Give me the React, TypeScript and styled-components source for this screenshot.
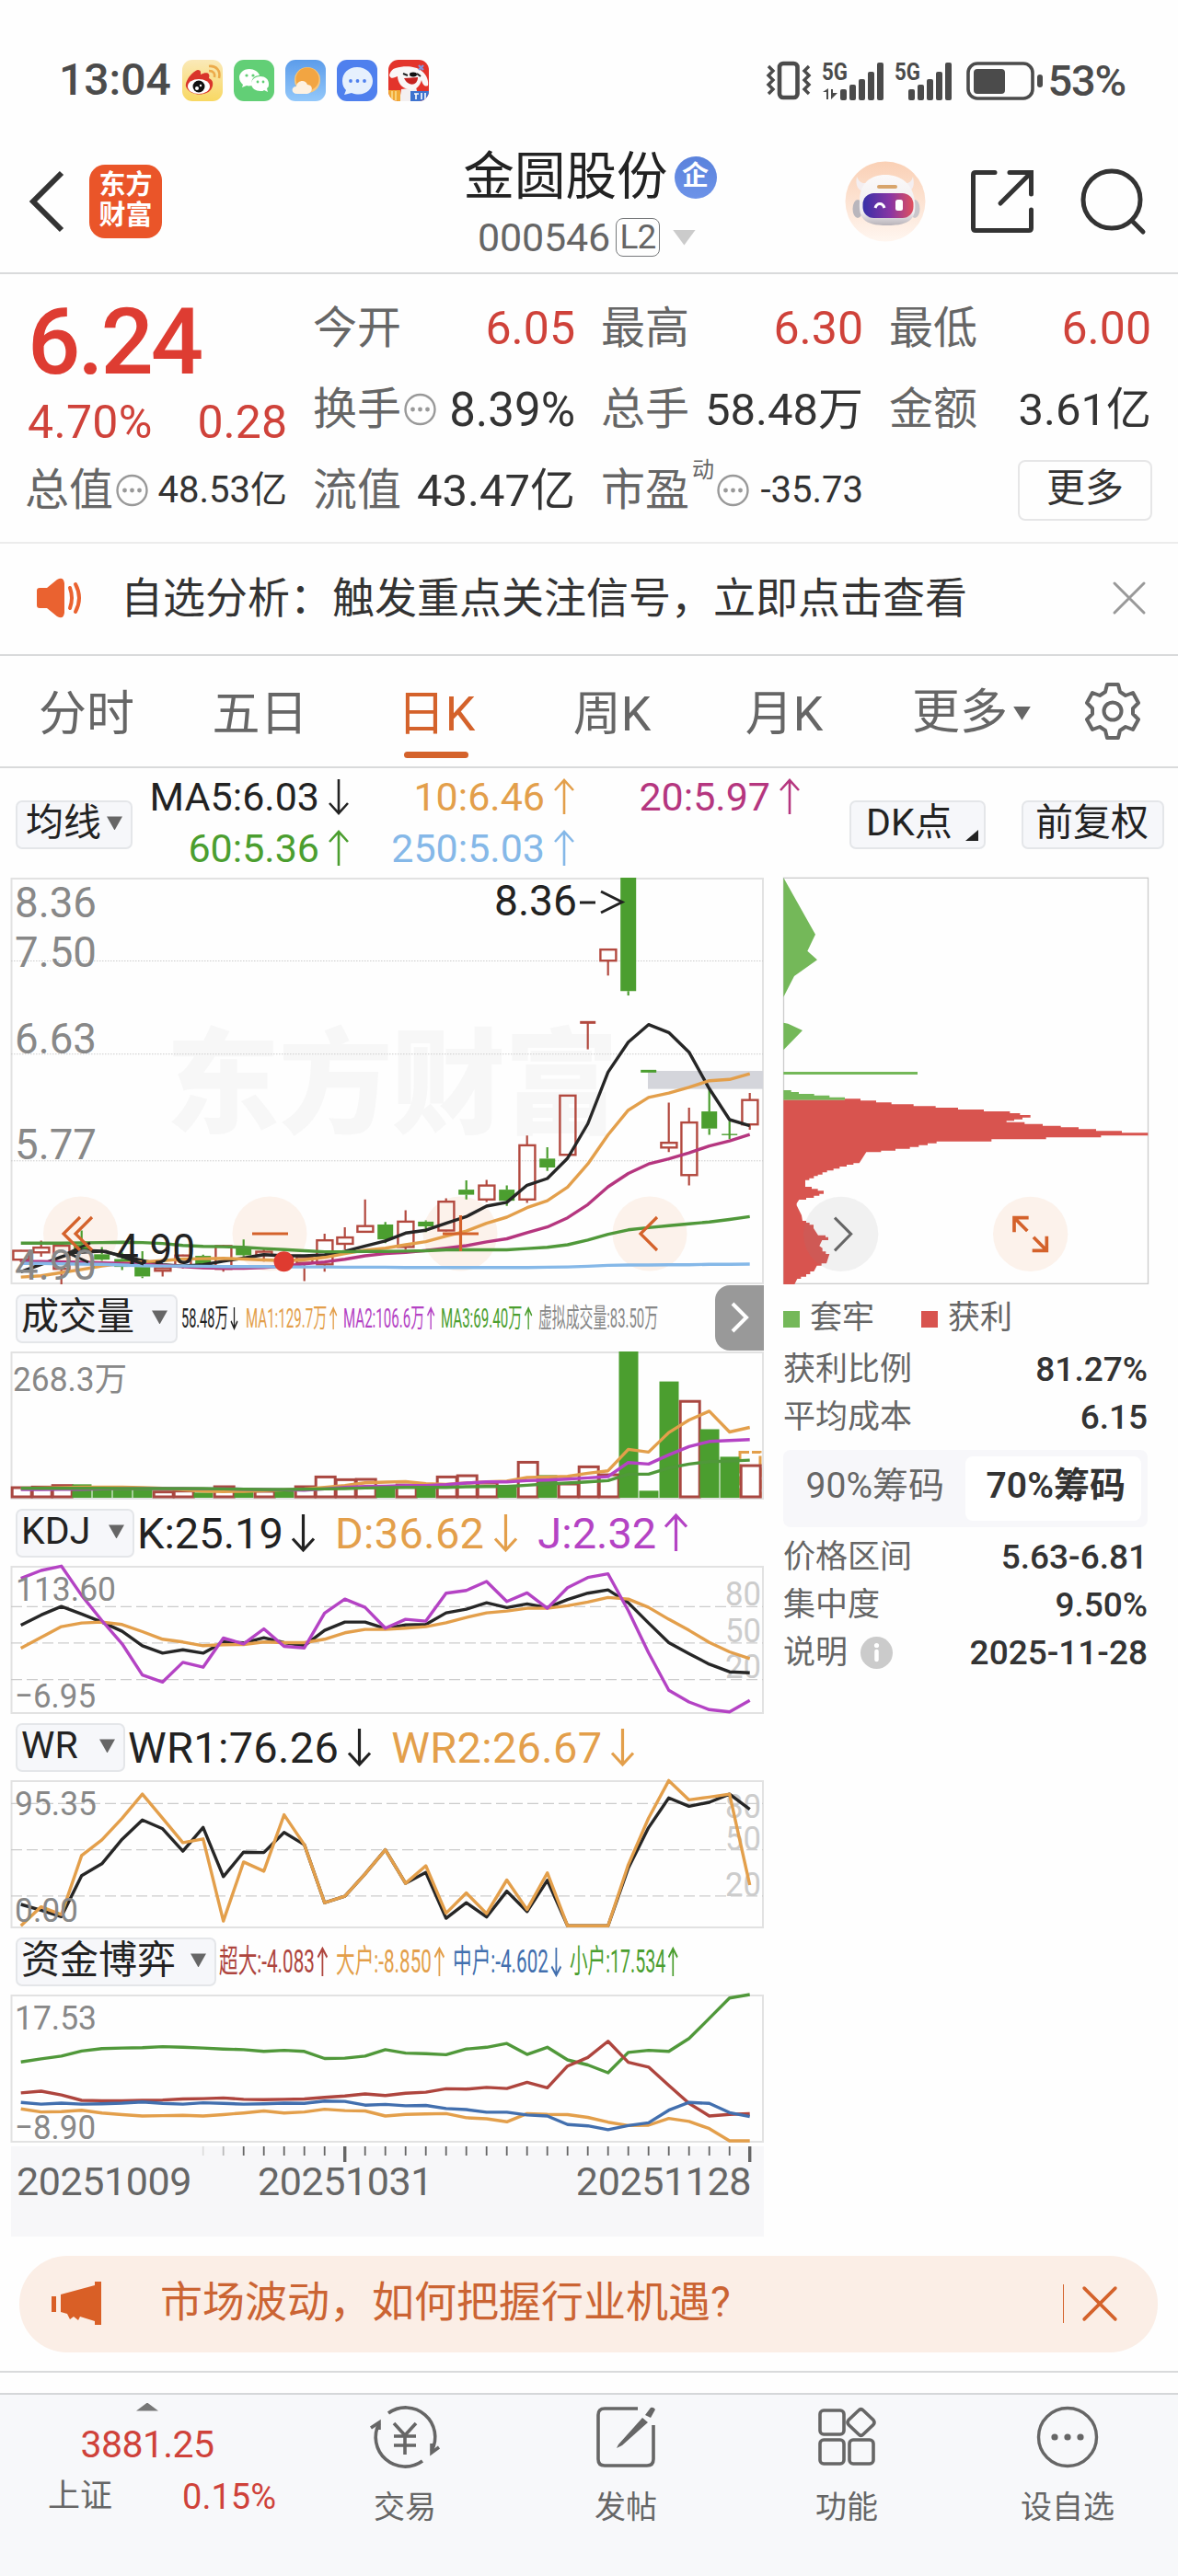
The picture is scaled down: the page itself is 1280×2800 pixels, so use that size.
import * as React from "react";
import styled, { createGlobalStyle } from "styled-components";

const RED = "#cf423a";
const ORANGE = "#e39f4b";
const GREEN = "#4b9e2f";
const BRAND = "#d4622b";

const GlobalStyle = createGlobalStyle`
  * {
    box-sizing: border-box;
  }
  body {
    margin: 0;
    background: #ffffff;
    font-family: Roboto, "Noto Sans CJK SC", sans-serif;
    color: #333333;
  }
  svg {
    display: block;
    flex: none;
    overflow: visible;
  }
`;

const Page = styled.div`
  width: 1280px;
  height: 2800px;
  display: flex;
  flex-direction: column;
  overflow: hidden;
  background: #fefefe;
  white-space: nowrap;
`;

const Text = styled.span<{
  size: number;
  color?: string;
  weight?: number;
  spacing?: number;
  lineHeight?: number;
}>`
  font-size: ${(p) => p.size}px;
  line-height: ${(p) => p.lineHeight || p.size}px;
  color: ${(p) => p.color || "#333333"};
  font-weight: ${(p) => p.weight || 400};
  letter-spacing: ${(p) => p.spacing || 0}px;
`;

const StatusBar = styled.div`
  height: 124px;
  padding: 49px 57px 0 64px;
  display: flex;
  justify-content: space-between;
`;

const StatusGroup = styled.div<{ gap: number }>`
  height: 76px;
  display: flex;
  align-items: center;
  gap: ${(p) => p.gap}px;
`;

const Header = styled.div`
  height: 175px;
  padding: 0 34px 0 32px;
  display: grid;
  grid-template-columns: 400px 1fr 400px;
  border-bottom: 2px solid #d9dadb;

  .left {
    display: flex;
    align-items: center;
    gap: 27px;
    padding-top: 18px;
  }
  .center {
    display: flex;
    flex-direction: column;
    align-items: center;
    padding-top: 41px;
  }
  .right {
    display: flex;
    align-items: center;
    justify-content: flex-end;
    padding-top: 18px;
  }
`;

const AppLogo = styled.div`
  width: 79px;
  height: 80px;
  border-radius: 17px;
  background: #ea5529;
  color: #ffffff;
  font-size: 29px;
  line-height: 33px;
  font-weight: 700;
  text-align: center;
  padding-top: 6px;
`;

const TitleRow = styled.div`
  display: flex;
  align-items: center;
  gap: 7px;
  height: 56px;
  margin-left: 4px;
`;

const CompanyBadge = styled.span`
  width: 46px;
  height: 46px;
  border-radius: 50%;
  background: linear-gradient(#5a82dc, #6d93e8);
  color: #ffffff;
  font-size: 29px;
  font-weight: 700;
  line-height: 43px;
  text-align: center;
`;

const CodeRow = styled.div`
  display: flex;
  align-items: center;
  height: 44px;
  margin-top: 15px;
  margin-left: -3px;
`;

const LevelTag = styled.span`
  width: 48px;
  height: 42px;
  margin-left: 6px;
  border: 1.5px solid #77797b;
  border-radius: 8px;
  font-size: 37px;
  line-height: 39px;
  letter-spacing: -1px;
  text-align: center;
  color: #666666;
`;

const Triangle = styled.i<{ w: number; h: number; color: string; left?: number }>`
  display: inline-block;
  flex: none;
  width: ${(p) => p.w}px;
  height: ${(p) => p.h}px;
  margin-left: ${(p) => p.left || 0}px;
  background: ${(p) => p.color};
  clip-path: polygon(0 0, 100% 0, 50% 100%);
`;

const UpTriangle = styled(Triangle)`
  clip-path: polygon(50% 0, 100% 100%, 0 100%);
`;

const Quote = styled.div`
  height: 293px;
  padding: 15px 29px 0;
  display: grid;
  grid-template-columns: repeat(4, 284px);
  column-gap: 29px;
  border-bottom: 2px solid #ececec;
`;

const QuoteColumn = styled.div`
  display: flex;
  flex-direction: column;
`;

const QuoteRow = styled.div<{ h?: number }>`
  height: ${(p) => p.h || 88}px;
  padding: 0 1px;
  display: flex;
  align-items: center;
  justify-content: space-between;

  .label {
    display: flex;
    align-items: center;
    gap: 3px;
    margin-left: -3px;
  }
`;

const SuperScript = styled.sup`
  align-self: flex-start;
  margin: -10px 0 0 0;
  font-size: 24px;
  line-height: 24px;
  color: #666666;
`;

const MoreButton = styled.div`
  width: 146px;
  height: 66px;
  margin-right: -1px;
  border: 2px solid #e6e6e7;
  border-radius: 8px;
  text-align: center;
  font-size: 42px;
  line-height: 58px;
`;

const Notice = styled.div`
  height: 123px;
  padding: 0 35px 2px 39px;
  display: flex;
  align-items: center;
  border-bottom: 2px solid #d9dadb;

  .message {
    flex: 1;
    margin-left: 38px;
  }
`;

const Tabs = styled.div`
  height: 122px;
  display: flex;
  border-bottom: 2px solid #d9dadb;
`;

const Tab = styled.div<{ w: number; active?: boolean }>`
  width: ${(p) => p.w}px;
  display: flex;
  flex-direction: column;
  align-items: center;
  padding-top: 36px;
  font-size: 52px;
  line-height: 56px;
  color: ${(p) => (p.active ? BRAND : "#666666")};

  &::after {
    content: "";
    width: 70px;
    height: 7px;
    margin-top: 12px;
    border-radius: 4px;
    background: ${(p) => (p.active ? BRAND : "transparent")};
  }
`;

const MoreTab = styled.div`
  width: 175px;
  padding-top: 4px;
  display: flex;
  align-items: center;
  justify-content: flex-end;
`;

const IndicatorBar = styled.div`
  height: 119px;
  padding: 4px 16px 0 17px;
  display: flex;
  align-items: center;
`;

const SelectBox = styled.div<{ w: number; pad?: number }>`
  position: relative;
  flex: none;
  width: ${(p) => p.w}px;
  height: 53px;
  padding: 0 ${(p) => p.pad || 10}px 3px;
  display: flex;
  align-items: center;
  justify-content: space-between;
  background: #f6f7fa;
  border: 2px solid #e4e6e9;
  border-radius: 7px;
`;

const IndicatorSelect = styled(SelectBox)`
  padding: 0 9px 3px 4px;
`;

const Corner = styled.i`
  position: absolute;
  right: 6px;
  bottom: 7px;
  width: 14px;
  height: 12px;
  background: #222222;
  clip-path: polygon(100% 0, 100% 100%, 0 100%);
`;

const AverageGrid = styled.div`
  width: 735px;
  margin-left: -10px;
  padding-bottom: 4px;
  display: grid;
  grid-template-columns: repeat(3, 245px);

  > div {
    height: 56px;
    display: flex;
    align-items: center;
    justify-content: flex-end;
    gap: 10px;
  }
`;

const Content = styled.div`
  height: 1477px;
  display: flex;
`;

const ChartColumn = styled.div`
  width: 818px;
  margin-left: 12px;
  display: flex;
  flex-direction: column;
`;

const Panel = styled.div<{ h: number }>`
  width: 818px;
  height: ${(p) => p.h}px;
`;

const PanelHead = styled.div`
  height: 74px;
  padding: 3px 0 0 5px;
  display: flex;
  align-items: center;
  position: relative;
`;

const LegendItem = styled.div<{ left?: number; gap?: number }>`
  display: flex;
  align-items: center;
  margin-left: ${(p) => p.left || 0}px;
  gap: ${(p) => p.gap || 0}px;
`;

// narrow lettering for legends that would not fit on one line
const Condensed = styled.div<{ w: number; k: number; left: number }>`
  flex: none;
  width: ${(p) => p.w}px;
  margin-left: ${(p) => p.left}px;

  > div {
    width: max-content;
    display: flex;
    align-items: center;
    gap: 5px;
    transform: scaleX(${(p) => p.k});
    transform-origin: left center;
  }
`;

const SideToggle = styled.div`
  position: absolute;
  right: 0;
  top: 2px;
  width: 53px;
  height: 71px;
  border-radius: 16px 0 0 16px;
  background: #999999;
  display: flex;
  align-items: center;
  justify-content: center;
`;

const DateAxis = styled.div`
  height: 98px;
  margin-top: 5px;
  background: #f7f7f9;
`;

const DateRow = styled.div`
  margin-top: -1px;
  padding: 0 14px 0 6px;
  display: grid;
  grid-template-columns: 262px 1fr auto;
`;

const ChipColumn = styled.div`
  width: 396px;
  margin-left: 21px;
  display: flex;
  flex-direction: column;
`;

const ChipLegend = styled.div`
  height: 67px;
  padding-top: 7px;
  display: flex;
  align-items: center;
`;

const Square = styled.i<{ color: string; left?: number }>`
  width: 18px;
  height: 18px;
  margin: 2px 11px 0 ${(p) => p.left || 0}px;
  background: ${(p) => p.color};
`;

const ChipRow = styled.div`
  height: 52px;
  display: flex;
  align-items: center;
  justify-content: space-between;

  .label {
    display: flex;
    align-items: center;
    gap: 14px;
  }
`;

const Segmented = styled.div`
  height: 84px;
  margin: 9px 0 7px;
  padding: 7px;
  display: flex;
  background: #f7f7fa;
  border-radius: 8px;

  .segment {
    flex: 1;
    display: flex;
    align-items: center;
    justify-content: center;
    padding: 0 5px 4px 0;
  }
  .selected {
    padding: 0 0 4px 6px;
    background: #ffffff;
    border-radius: 8px;
  }
`;

const Banner = styled.div`
  height: 105px;
  margin: 21px 22px 20px 21px;
  padding: 0 44px 0 35px;
  display: flex;
  align-items: center;
  background: #fbeee6;
  border-radius: 52px;

  .message {
    flex: 1;
    margin-left: 64px;
    padding-bottom: 4px;
  }
  .divider {
    width: 1px;
    height: 42px;
    margin-right: 20px;
    background: ${BRAND};
  }
`;

const Spacer = styled.div`
  height: 24px;
  border-top: 2px solid #d9dadb;
`;

const BottomNav = styled.div`
  height: 200px;
  display: flex;
  background: #f7f8fa;
  border-top: 2px solid #d5d7d9;
`;

const IndexCell = styled.div`
  width: 320px;
  padding-top: 9px;
  display: flex;
  flex-direction: column;
  align-items: center;

  .row {
    width: 248px;
    margin: 16px 0 0 32px;
    display: flex;
    justify-content: space-between;
  }
`;

const NavItem = styled.div`
  width: 240px;
  padding-top: 11px;
  display: flex;
  flex-direction: column;
  align-items: center;
  gap: 24px;
`;

/* ---------- icons ---------- */

const Arrow: React.FC<{ up?: boolean; color: string; w?: number; h?: number; sw?: number }> = ({
  up,
  color,
  w = 22,
  h = 40,
  sw = 2.6,
}) => (
  <svg width={w} height={h} viewBox={`0 0 ${w} ${h}`} fill="none" stroke={color} strokeWidth={sw}>
    {up ? (
      <path d={`M${w / 2} ${h - 1}V2M1 ${w / 2 + 2}L${w / 2} 2L${w - 1} ${w / 2 + 2}`} />
    ) : (
      <path d={`M${w / 2} 1V${h - 2}M1 ${h - w / 2 - 2}L${w / 2} ${h - 2}L${w - 1} ${h - w / 2 - 2}`} />
    )}
  </svg>
);

const DotsIcon = () => (
  <svg width="35" height="36" viewBox="0 0 35 36">
    <circle cx="17.5" cy="18" r="16" fill="none" stroke="#999999" strokeWidth="2.4" />
    <g fill="#999999">
      <circle cx="9.5" cy="18" r="2.4" />
      <circle cx="17.5" cy="18" r="2.4" />
      <circle cx="25.5" cy="18" r="2.4" />
    </g>
  </svg>
);

const CloseIcon: React.FC<{ size: number; color: string; sw: number }> = ({ size, color, sw }) => (
  <svg width={size} height={size} viewBox="0 0 36 36" stroke={color} strokeWidth={sw} strokeLinecap="round">
    <path d="M2 2L34 34M34 2L2 34" />
  </svg>
);

const AppIcons = () => (
  <>
    <svg width="44" height="45" viewBox="0 0 44 45">
      <defs>
        <linearGradient id="weibo" x2="0" y2="1">
          <stop stopColor="#fae9b8" />
          <stop offset="1" stopColor="#f8d862" />
        </linearGradient>
      </defs>
      <rect width="44" height="45" rx="11" fill="url(#weibo)" />
      <path d="M4 29C3 22 12 12 17 11C21 11 20 15 20 16C26 13 31 14 29 20C34 22 34 27 32 31C28 40 8 40 4 29Z" fill="#d9352b" />
      <ellipse cx="18" cy="29" rx="12" ry="8" fill="#ffffff" />
      <circle cx="18" cy="29" r="6.5" fill="#111111" />
      <circle cx="16" cy="31" r="2" fill="#ffffff" />
      <circle cx="20" cy="28" r="1.2" fill="#ffffff" />
      <path d="M29 7C37 6 42 12 40 20M29 12C34 12 36 15 35 19" fill="none" stroke="#ecaa4a" strokeWidth="2.6" />
    </svg>
    <svg width="44" height="45" viewBox="0 0 44 45">
      <rect width="44" height="45" rx="11" fill="#62cf76" />
      <path d="M17 10C10 10 6 15 6 19C6 23 8 25 10 27L9 30L14 28C16 29 20 28 20 28C18 21 22 17 28 17C27 13 22 10 17 10Z" fill="#ffffff" />
      <path d="M29 18C23 18 19 22 19 26C19 31 24 34 29 34C31 34 32 34 33 33L37 35L36 31C38 30 38 28 38 26C38 21 34 18 29 18Z" fill="#ffffff" />
      <g fill="#62cf76">
        <circle cx="14" cy="17" r="1.6" />
        <circle cx="21" cy="17" r="1.6" />
        <circle cx="26" cy="24" r="1.4" />
        <circle cx="32" cy="24" r="1.4" />
      </g>
    </svg>
    <svg width="44" height="45" viewBox="0 0 44 45">
      <defs>
        <linearGradient id="sky" x2="0" y2="1">
          <stop stopColor="#5c9cea" />
          <stop offset="1" stopColor="#93c8fa" />
        </linearGradient>
      </defs>
      <rect width="44" height="45" rx="11" fill="url(#sky)" />
      <circle cx="24" cy="22" r="14" fill="#f7c67a" />
      <circle cx="24" cy="21" r="12.5" fill="#f2a542" />
      <path d="M13 37C6 37 6 29 12 29C13 22 22 21 24 27C31 27 30 36 24 37Z" fill="#fdf1e2" />
    </svg>
    <svg width="44" height="45" viewBox="0 0 44 45">
      <rect width="44" height="45" rx="11" fill="#4f80ee" />
      <path d="M22 8C12 8 6 15 6 23C6 28 8 31 10 33L8 38L16 36C29 41 39 33 39 23C39 15 32 8 22 8Z" fill="#e6f0fd" />
      <g fill="#4f80ee">
        <circle cx="15" cy="23" r="1.9" />
        <circle cx="22.5" cy="23" r="1.9" />
        <circle cx="30" cy="23" r="1.9" />
      </g>
    </svg>
    <svg width="44" height="45" viewBox="0 0 44 45">
      <defs>
        <clipPath id="jd">
          <rect width="44" height="45" rx="11" />
        </clipPath>
      </defs>
      <g clipPath="url(#jd)">
        <rect width="44" height="45" fill="#e3342b" />
        <path d="M14 32L30 30L34 45H12Z" fill="#f4f0f0" />
        <path d="M8 9C18 6 30 7 36 12C42 16 44 24 43 28C39 30 37 26 36 22C34 30 28 34 22 32C14 31 10 24 10 18C7 19 3 22 1 17C2 13 4 10 8 9Z" fill="#faf7f7" />
        <path d="M17 20L32 19C32 28 22 30 17 20Z" fill="#c52320" />
        <path d="M16 15L21 17M31 15L35 18" stroke="#222222" strokeWidth="2" />
        <ellipse cx="27" cy="16" rx="4" ry="2.4" fill="#111111" />
        <path d="M0 33H13V45H0Z" fill="#f1a934" />
        <path d="M4 34V45M8 34V45" stroke="#fbdc8c" strokeWidth="1.6" />
        <rect x="24" y="34" width="20" height="11" fill="#3e73cf" />
        <path d="M28 37H33M30 37V43M36 36V43M40 36V43" stroke="#ffffff" strokeWidth="1.6" />
        <path d="M33 6L38 11M38 6L33 11" stroke="#8296dc" strokeWidth="2.4" />
      </g>
    </svg>
  </>
);

const StatusIcons = () => (
  <svg width="304" height="46" viewBox="829 62 304 46">
    <g fill="none" stroke="#4b4b4b">
      <rect x="846" y="67" width="19.5" height="37" rx="4" strokeWidth="4.6" />
      <path d="M834 70L839 75L834 80L839 85L834 90L839 95L834 100M878 70L873 75L878 80L873 85L878 90L873 95L878 100" strokeWidth="3.4" />
      <rect x="1051" y="67" width="70" height="38" rx="10" strokeWidth="3.6" />
    </g>
    <g fill="#4b4b4b">
      <text x="892" y="85" fontSize="25" fontWeight="700" textLength="28" lengthAdjust="spacingAndGlyphs">5G</text>
      <text x="971" y="85" fontSize="25" fontWeight="700" textLength="28" lengthAdjust="spacingAndGlyphs">5G</text>
      <path d="M893 98L899 94V106H897V98ZM902 95V106L909 99H904V95Z" />
      <rect x="912" y="95" width="7" height="12" rx="2" />
      <rect x="922" y="90" width="7" height="17" rx="2" />
      <rect x="932" y="84" width="7" height="23" rx="2" />
      <rect x="942" y="76" width="7" height="31" rx="2" />
      <rect x="952" y="66" width="7" height="41" rx="2" />
      <rect x="986" y="95" width="7" height="12" rx="2" />
      <rect x="996" y="90" width="7" height="17" rx="2" />
      <rect x="1006" y="84" width="7" height="23" rx="2" />
      <rect x="1016" y="76" width="7" height="31" rx="2" />
      <rect x="1026" y="66" width="7" height="41" rx="2" />
      <rect x="1057" y="73" width="34" height="27" rx="4" />
      <rect x="1126" y="79" width="6" height="14" rx="3" />
    </g>
  </svg>
);

const BackIcon = () => (
  <svg width="38" height="66" viewBox="0 0 38 66" fill="none" stroke="#333333" strokeWidth="6">
    <path d="M35 2L4 33L35 64" />
  </svg>
);

const RobotIcon = () => (
  <svg width="88" height="88" viewBox="0 0 88 88">
    <defs>
      <linearGradient id="halo" x2="0" y2="1">
        <stop stopColor="#fad0b5" />
        <stop offset="1" stopColor="#fff6f0" />
      </linearGradient>
      <linearGradient id="visor">
        <stop stopColor="#3730a8" />
        <stop offset="0.55" stopColor="#8a36a3" />
        <stop offset="1" stopColor="#e0505d" />
      </linearGradient>
      <linearGradient id="helmet" x2="0" y2="1">
        <stop stopColor="#fbf9f9" />
        <stop offset="0.75" stopColor="#efecef" />
        <stop offset="1" stopColor="#b7b2b8" />
      </linearGradient>
    </defs>
    <circle cx="44" cy="44" r="43.5" fill="url(#halo)" />
    <path d="M13 17C11 26 14 34 24 33L28 22C20 26 16 24 13 17ZM74 17C76 26 75 34 64 33L60 22C68 26 72 24 74 17Z" fill="#f4eef0" />
    <ellipse cx="14" cy="52" rx="5.5" ry="10" fill="#b9b6bc" />
    <ellipse cx="76" cy="52" rx="5.5" ry="10" fill="#c9c6cb" />
    <path d="M16 44C16 24 28 15 44 15C60 15 74 24 76 44C78 62 72 70 46 70C20 70 15 62 16 44Z" fill="url(#helmet)" />
    <rect x="19.5" y="35" width="55" height="27" rx="12" fill="url(#visor)" />
    <path d="M33 51C35 45 41 45 43 51" fill="none" stroke="#ffffff" strokeWidth="3" />
    <rect x="55" y="42" width="8" height="12" rx="2.5" fill="#ffffff" />
    <rect x="35" y="26" width="22" height="4" rx="2" fill="#d8a56c" />
  </svg>
);

const ShareIcon = () => (
  <svg width="70" height="70" viewBox="0 0 70 70" fill="none" stroke="#333333" strokeWidth="5" strokeLinecap="round">
    <path d="M27 3.5H6Q3.5 3.5 3.5 6V64Q3.5 66.5 6 66.5H64Q66.5 66.5 66.5 64V44" />
    <path d="M43 3.5H66.5V27M65 5L33 37" />
  </svg>
);

const SearchIcon = () => (
  <svg width="72" height="72" viewBox="0 0 72 72" fill="none" stroke="#333333" strokeWidth="5" strokeLinecap="round">
    <circle cx="34" cy="34" r="31" />
    <path d="M56 57L68 69" />
  </svg>
);

const SpeakerIcon = () => (
  <svg width="54" height="44" viewBox="0 0 54 44">
    <path d="M4 11H12L23 2Q30 -2 31 6V38Q30 46 23 42L12 33H4Q1 33 1 30V14Q1 11 4 11Z" fill="#ea6230" />
    <path d="M37 11Q41 22 37 33M43 7Q51 22 43 37" fill="none" stroke="#ea6230" strokeWidth="4" strokeLinecap="round" />
  </svg>
);

const GearIcon = () => (
  <svg width="60" height="62" viewBox="0 0 60 62" fill="none" stroke="#666666" strokeWidth="4" strokeLinejoin="round">
    <path d="M24 2H36L38 10L44 14L52 11L58 22L52 28V34L58 40L52 51L44 48L38 52L36 60H24L22 52L16 48L8 51L2 40L8 34V28L2 22L8 11L16 14L22 10Z" />
    <circle cx="30" cy="31" r="9.5" />
  </svg>
);

const MegaphoneIcon = () => (
  <svg width="54" height="48" viewBox="0 0 54 48" fill="#d95f26">
    <path d="M0 16H5V33H0ZM10 14L47 4V0H54V47H47V43L31 38L29 42L24 38L20 41L17 35L10 33Z" />
  </svg>
);

const TradeIcon = () => (
  <svg width="78" height="70" viewBox="0 0 78 70" fill="none" stroke="#666666" strokeWidth="3.6">
    <path d="M21 9A32 32 0 0 1 68 50M58 61A32 32 0 0 1 11 20" />
    <path d="M2 25L11 19V27M76 46L68 52V42" />
    <path d="M27 20L39 33L51 20M39 33V54M27 34H51M27 44H51" />
  </svg>
);

const PostIcon = () => (
  <svg width="66" height="70" viewBox="0 0 66 70" fill="none" stroke="#666666" strokeWidth="3.6">
    <path d="M46 4H10Q3 4 3 11V59Q3 66 10 66H56Q63 66 63 59V22" />
    <path d="M25 43L51 14L57 19L29 44L23 47ZM54 11L60 3Q63 2 65 5L60 14Z" fill="#666666" stroke="none" />
  </svg>
);

const GridIcon = () => (
  <svg width="66" height="70" viewBox="0 0 66 70" fill="none" stroke="#666666" strokeWidth="3.6">
    <rect x="4" y="6" width="26" height="26" rx="4" />
    <rect x="4" y="38" width="26" height="26" rx="4" />
    <rect x="36" y="38" width="26" height="26" rx="4" />
    <path d="M46 6Q48.500 3.5 51 6L62 16.5Q64 19 62 21.5L51 32Q48.5 34.5 46 32L35 21.5Q33 19 35 16.5Z" />
  </svg>
);

const MoreIcon = () => (
  <svg width="70" height="70" viewBox="0 0 70 70">
    <circle cx="35" cy="35" r="31.5" fill="none" stroke="#666666" strokeWidth="3.4" />
    <g fill="#666666">
      <circle cx="21" cy="35" r="3.6" />
      <circle cx="35" cy="35" r="3.6" />
      <circle cx="49" cy="35" r="3.6" />
    </g>
  </svg>
);

/* ---------- charts ---------- */

const STEP = 22;
const xAt = (i: number) => 10.7 + i * STEP;

interface Scale {
  top: number;
  bottom: number;
  height: number;
}

const yAt = (v: number, s: Scale) => ((v - s.top) / (s.bottom - s.top)) * s.height;

const Line: React.FC<{ data: number[]; scale: Scale; color: string; sw?: number }> = ({
  data,
  scale,
  color,
  sw = 3.4,
}) => (
  <polyline
    points={data.map((v, i) => `${xAt(i).toFixed(1)},${yAt(v, scale).toFixed(1)}`).join(" ")}
    fill="none"
    stroke={color}
    strokeWidth={sw}
    strokeLinejoin="round"
  />
);

const Frame: React.FC<{ h: number }> = ({ h }) => (
  <rect x="0.5" y="1" width="816.5" height={h - 1} fill="none" stroke="#e2e2e2" strokeWidth="2" />
);

const AxisText: React.FC<{
  x: number;
  y: number;
  w: number;
  size: number;
  color?: string;
  children: React.ReactNode;
}> = ({ x, y, w, size, color = "#888888", children }) => (
  <text x={x} y={y} fontSize={size} fill={color} textLength={w} lengthAdjust="spacingAndGlyphs">
    {children}
  </text>
);

const priceScale: Scale = { top: 46, bottom: 1327, height: 441 };

const ma5 = [
  1290, 1267, 1243, 1222, 1225, 1240, 1255, 1268, 1272, 1268, 1257, 1247, 1236, 1240, 1240, 1237, 1226, 1209, 1193,
  1168, 1159, 1137, 1116, 1083, 1071, 1017, 996, 932, 823, 660, 565, 510, 535, 597, 712, 810, 829,
];
const ma10 = [
  1307, 1303, 1293, 1283, 1272, 1264, 1259, 1255, 1250, 1249, 1248, 1250, 1253, 1255, 1252, 1245, 1233, 1222, 1216,
  1205, 1195, 1178, 1162, 1137, 1118, 1088, 1066, 1023, 950, 858, 780, 740, 726, 708, 687, 683, 665,
];
const ma20 = [
  1258, 1258, 1259, 1260, 1262, 1264, 1267, 1270, 1274, 1278, 1279, 1279, 1277, 1272, 1265, 1259, 1251, 1240, 1233,
  1229, 1223, 1216, 1208, 1196, 1186, 1167, 1149, 1120, 1078, 1022, 980, 950, 934, 915, 893, 877, 857,
];
const ma60 = [
  1200, 1200, 1200, 1199, 1198, 1197, 1198, 1201, 1207, 1210, 1211, 1213, 1217, 1220, 1224, 1227, 1227, 1226, 1226,
  1225, 1224, 1221, 1221, 1221, 1221, 1217, 1213, 1205, 1190, 1172, 1158, 1151, 1145, 1139, 1133, 1125, 1116,
];
const ma250 = [
  1264, 1264, 1265, 1266, 1267, 1269, 1271, 1272, 1272, 1273, 1274, 1274, 1274, 1275, 1275, 1275, 1276, 1276, 1276,
  1277, 1277, 1277, 1277, 1277, 1277, 1277, 1276, 1275, 1273, 1270, 1269, 1269, 1268, 1268, 1267, 1267, 1266,
];

// high, body top, body bottom, low, rising
const candles: [number, number, number, number, boolean][] = [
  [1222, 1224, 1252, 1260, true],
  [1192, 1214, 1229, 1243, true],
  [1205, 1208, 1281, 1330, true],
  [1160, 1204, 1222, 1228, false],
  [1212, 1235, 1252, 1256, false],
  [1230, 1250, 1275, 1285, false],
  [1225, 1275, 1305, 1310, false],
  [1272, 1279, 1287, 1305, true],
  [1236, 1239, 1274, 1280, true],
  [1236, 1240, 1268, 1270, false],
  [1206, 1209, 1281, 1290, true],
  [1188, 1212, 1238, 1242, false],
  [1215, 1227, 1237, 1258, true],
  [1238, 1245, 1260, 1270, true],
  [1240, 1244, 1262, 1320, true],
  [1170, 1191, 1267, 1290, true],
  [1150, 1182, 1202, 1220, true],
  [1062, 1146, 1164, 1167, true],
  [1133, 1141, 1188, 1200, false],
  [1096, 1132, 1212, 1220, true],
  [1128, 1132, 1147, 1165, false],
  [1058, 1069, 1160, 1163, true],
  [1002, 1031, 1047, 1062, false],
  [1000, 1018, 1062, 1070, true],
  [1018, 1031, 1066, 1082, false],
  [860, 891, 1062, 1073, true],
  [897, 933, 961, 972, false],
  [732, 734, 921, 923, true],
  [503, 503, 503, 588, true],
  [273, 273, 308, 355, true],
  [46, 46, 404, 418, false],
  [657, 657, 657, 657, false],
  [756, 883, 898, 912, true],
  [772, 819, 985, 1018, true],
  [712, 784, 838, 858, false],
  [815, 857, 857, 872, false],
  [726, 748, 825, 842, true],
];

const PriceChart = () => {
  const y = (v: number) => yAt(v, priceScale);
  return (
    <svg width="818" height="441" viewBox="0 0 818 441">
      <Frame h={441} />
      <text x="168" y="268" fontSize="124" fontWeight="900" fill="#f7f7f7" textLength="492">
        东方财富
      </text>
      {[309, 603, 940].map((v) => (
        <path key={v} d={`M0 ${y(v)}H817`} stroke="#cccccc" strokeWidth="1" strokeDasharray="1.5 1.5" />
      ))}
      {[75.5, 281, 488, 694].map((cx) => (
        <circle key={cx} cx={cx} cy="387" r="40.5" fill="#fcf2eb" />
      ))}
      <rect x="692" y={y(656)} width="125" height={y(713) - y(656)} fill="#d4d5db" />
      {candles.map(([high, top, bottom, low, up], i) => {
        const cx = xAt(i);
        const color = up ? "#b2493f" : GREEN;
        const flat = top === bottom;
        return (
          <g key={i} stroke={color} strokeWidth="2.2">
            <path d={`M${cx} ${y(high)}V${y(top)}M${cx} ${y(bottom)}V${y(low)}`} />
            {flat && <path d={`M${cx - 8.5} ${y(top)}H${cx + 8.5}`} strokeWidth={low - high > 50 && !up ? 1.4 : 3} />}
            {!flat && up && (
              <rect x={cx - 8.3} y={y(top)} width="17" height={y(bottom) - y(top)} fill="none" strokeWidth="2.4" />
            )}
            {!flat && !up && (
              <rect x={cx - 8.5} y={y(top)} width="17" height={y(bottom) - y(top)} fill={color} stroke="none" />
            )}
          </g>
        );
      })}
      <Line data={ma5} scale={priceScale} color="#262626" />
      <Line data={ma10} scale={priceScale} color={ORANGE} />
      <Line data={ma20} scale={priceScale} color="#b5367f" />
      <Line data={ma60} scale={priceScale} color="#50983a" />
      <Line data={ma250} scale={priceScale} color="#85b8e8" />
      <circle cx="296.5" cy={y(1258)} r="11" fill="#df3b30" />
      <path d="M86 397L62 408L84 418M62 408L103 406L144 420" fill="none" stroke="#262626" strokeWidth="3" />
      <g fill="none" stroke={BRAND} strokeWidth="3.2">
        <path d="M75 369L57 387L75 405M88 369L70 387L88 405" />
        <path d="M262 387H301M469 387H508M488.5 367V406M702 369L684 387L702 405" />
      </g>
      <AxisText x={4} y={43} w={89} size={47}>8.36</AxisText>
      <AxisText x={4} y={97} w={89} size={47}>7.50</AxisText>
      <AxisText x={4} y={191} w={89} size={47}>6.63</AxisText>
      <AxisText x={4} y={306} w={89} size={47}>5.77</AxisText>
      <AxisText x={4} y={437} w={89} size={47}>4.90</AxisText>
      <AxisText x={525} y={41} w={90} size={47} color="#222222">8.36</AxisText>
      <path d="M618 27H635M641 15L664 26.5L641 38" fill="none" stroke="#222222" strokeWidth="3" />
      <AxisText x={114} y={420} w={86} size={46} color="#222222">4.90</AxisText>
    </svg>
  );
};

const volumeScale: Scale = { top: 242, bottom: 720, height: 159 };

const volumes: [number, boolean][] = [
  [687, true], [685, true], [680, true], [676, false], [690, false], [690, false], [690, false], [701, true],
  [698, true], [703, false], [684, true], [695, false], [699, true], [697, false], [684, true], [652, true],
  [661, true], [660, true], [685, false], [678, true], [688, false], [652, true], [648, true], [672, true],
  [680, false], [604, true], [646, false], [675, true], [619, true], [645, true], [242, false], [697, false],
  [340, false], [405, true], [496, false], [586, false], [615, true],
];
const vol1 = [
  690, 688, 687, 685, 685, 685, 687, 689, 694, 698, 700, 699, 697, 694, 691, 686, 680, 671, 669, 667, 674, 676, 672,
  668, 666, 654, 652, 650, 640, 632, 562, 571, 507, 466, 437, 505, 490,
];
const vol2 = [
  693, 693, 692, 692, 691, 690, 690, 690, 690, 691, 691, 692, 693, 694, 695, 691, 686, 683, 682, 680, 680, 677, 672,
  668, 668, 664, 662, 659, 655, 651, 605, 610, 580, 553, 536, 533, 530,
];
const vol3 = [
  689, 689, 689, 689, 689, 690, 690, 690, 690, 690, 691, 692, 693, 693, 692, 691, 690, 688, 687, 686, 686, 686, 684,
  683, 683, 679, 675, 672, 668, 664, 643, 643, 623, 610, 602, 600, 597,
];

const VolumeChart = () => {
  const y = (v: number) => yAt(v, volumeScale);
  return (
    <svg width="818" height="160" viewBox="0 0 818 160">
      <Frame h={160} />
      <rect x="792" y={y(571)} width="22" height="48" fill="none" stroke={ORANGE} strokeWidth="3" strokeDasharray="10 3" />
      {volumes.map(([v, up], i) =>
        up ? (
          <rect key={i} x={xAt(i) - 9.5} y={y(v)} width="21" height={158 - y(v)} fill="#ffffff" stroke="#a94740" strokeWidth="3" />
        ) : (
          <rect key={i} x={xAt(i) - 10.2} y={y(v)} width="21" height={159 - y(v)} fill={GREEN} />
        )
      )}
      <Line data={vol1} scale={volumeScale} color={ORANGE} />
      <Line data={vol2} scale={volumeScale} color="#b443c4" />
      <Line data={vol3} scale={volumeScale} color="#50983a" />
      <AxisText x={2} y={43} w={124} size={36}>268.3万</AxisText>
    </svg>
  );
};

const kdjScale: Scale = { top: 942, bottom: 1418, height: 159 };

const kLine = [
  1135, 1102, 1074, 1099, 1125, 1155, 1202, 1226, 1215, 1226, 1190, 1193, 1176, 1192, 1202, 1152, 1125, 1125, 1146,
  1134, 1133, 1095, 1083, 1062, 1078, 1066, 1078, 1052, 1031, 1020, 1062, 1128, 1192, 1228, 1262, 1287, 1290,
];
const dLine = [
  1210, 1175, 1140, 1128, 1125, 1133, 1156, 1181, 1190, 1202, 1199, 1198, 1190, 1192, 1192, 1181, 1160, 1149, 1149,
  1145, 1140, 1127, 1110, 1095, 1089, 1080, 1080, 1072, 1060, 1045, 1050, 1077, 1116, 1152, 1191, 1222, 1244,
];
const jLine = [
  983, 957, 943, 1038, 1120, 1196, 1297, 1320, 1256, 1272, 1177, 1196, 1147, 1204, 1209, 1096, 1050, 1077, 1145, 1116,
  1122, 1031, 1022, 993, 1058, 1030, 1080, 1013, 980, 968, 1088, 1225, 1347, 1385, 1410, 1417, 1380,
];

const wrScale: Scale = { top: 207, bottom: 638, height: 159 };

const wr1 = [
  573, 590, 609, 488, 453, 381, 324, 350, 416, 346, 491, 419, 420, 361, 397, 568, 549, 483, 412, 511, 479, 614, 568,
  610, 534, 594, 502, 636, 636, 636, 466, 347, 259, 284, 272, 248, 293,
];
const wr2 = [
  636, 580, 603, 429, 383, 319, 248, 319, 391, 380, 622, 448, 475, 309, 397, 568, 549, 483, 412, 511, 459, 599, 539,
  600, 501, 588, 480, 636, 636, 636, 456, 319, 208, 265, 257, 248, 516,
];

const fundScale: Scale = { top: 838, bottom: 1268, height: 159 };

const retail = [
  1036, 1027, 1019, 1004, 997, 995, 994, 991, 993, 995, 998, 1000, 1005, 1002, 1005, 1026, 1025, 1019, 1000, 1010,
  1012, 1015, 998, 993, 982, 1014, 993, 1030, 1045, 1068, 1008, 1002, 1005, 967, 908, 848, 838,
];
const huge = [
  1127, 1122, 1133, 1149, 1150, 1150, 1149, 1148, 1145, 1144, 1142, 1146, 1147, 1146, 1145, 1140, 1136, 1130, 1135,
  1128, 1125, 1115, 1116, 1111, 1114, 1096, 1112, 1048, 1023, 975, 1037, 1051, 1105, 1158, 1195, 1190, 1188,
];
const middle = [
  1155, 1160, 1157, 1160, 1159, 1157, 1154, 1158, 1160, 1156, 1158, 1160, 1159, 1157, 1158, 1151, 1152, 1163, 1161,
  1165, 1164, 1173, 1176, 1184, 1184, 1192, 1195, 1220, 1224, 1235, 1223, 1215, 1178, 1155, 1158, 1185, 1197,
];
const large = [
  1174, 1183, 1182, 1178, 1186, 1191, 1195, 1194, 1193, 1195, 1191, 1186, 1180, 1186, 1183, 1175, 1179, 1180, 1195,
  1190, 1189, 1188, 1200, 1203, 1212, 1188, 1190, 1191, 1199, 1213, 1223, 1222, 1202, 1211, 1232, 1268, 1268,
];

const Guides: React.FC<{ values: number[]; scale: Scale }> = ({ values, scale }) => (
  <>
    {values.map((v) => (
      <path key={v} d={`M0 ${yAt(v, scale)}H817`} stroke="#cccccc" strokeWidth="1.2" strokeDasharray="12 5" />
    ))}
  </>
);

const Levels: React.FC<{ ys: number[] }> = ({ ys }) => (
  <>
    {["80", "50", "20"].map((t, i) => (
      <AxisText key={t} x={776} y={ys[i]} w={39} size={36} color="#cccccc">
        {t}
      </AxisText>
    ))}
  </>
);

const KdjChart = () => (
  <svg width="818" height="160" viewBox="0 0 818 160">
    <Frame h={160} />
    <Guides values={[1075, 1193, 1312]} scale={kdjScale} />
    <Levels ys={[43, 83, 122]} />
    <Line data={kLine} scale={kdjScale} color="#262626" />
    <Line data={dLine} scale={kdjScale} color={ORANGE} />
    <Line data={jLine} scale={kdjScale} color="#b443c4" />
    <AxisText x={5} y={38} w={109} size={37}>113.60</AxisText>
    <AxisText x={4} y={154} w={88} size={37}>−6.95</AxisText>
  </svg>
);

const WrChart = () => (
  <svg width="818" height="160" viewBox="0 0 818 160">
    <Frame h={160} />
    <Guides values={[276, 412, 548]} scale={wrScale} />
    <Levels ys={[41, 76, 126]} />
    <Line data={wr1} scale={wrScale} color="#262626" />
    <Line data={wr2} scale={wrScale} color={ORANGE} />
    <AxisText x={4} y={38} w={89} size={37}>95.35</AxisText>
    <AxisText x={4} y={154} w={69} size={37}>0.00</AxisText>
  </svg>
);

const FundChart = () => (
  <svg width="818" height="162" viewBox="0 0 818 162">
    <Frame h={160} />
    <Line data={retail} scale={fundScale} color="#50983a" />
    <Line data={huge} scale={fundScale} color="#ae453e" />
    <Line data={large} scale={fundScale} color={ORANGE} />
    <Line data={middle} scale={fundScale} color="#426fae" />
    <AxisText x={4} y={38} w={89} size={37}>17.53</AxisText>
    <AxisText x={4} y={157} w={88} size={37}>−8.90</AxisText>
  </svg>
);

const AxisTicks = () => (
  <svg width="818" height="18" viewBox="0 0 818 18">
    {Array.from({ length: 28 }, (_, n) => n + 9).map((i) => {
      const major = i === 16 || i === 36;
      return (
        <path
          key={i}
          d={`M${xAt(i)} 0V${major ? 17 : 10}`}
          stroke={i === 9 ? "#dddddd" : i === 10 ? "#bbbbbb" : "#666666"}
          strokeWidth={major ? 3.4 : 1.8}
        />
      );
    })}
  </svg>
);

const ChipChart = () => (
  <svg width="397" height="442" viewBox="62 48 1191 1326">
    <rect x="63.5" y="49" width="1188" height="1323" fill="none" stroke="#cccccc" strokeWidth="4" />
    <g fill="#74b859">
      <path d="M63 48L167 233L141 287L173 316L98 369L63 437ZM63 521L78 524L125 546L63 610Z" />
      <rect x="63" y="681" width="437" height="9" />
      <path d="M63 741H88V747H113V753H163V758H213V764H263V773H63Z" />
    </g>
    <path
      d="M63 773H263V769H314V775H365V781H415V787H487V793H559V798H632V804H716V810H801V816H834V822H868V830H842V836H815V841H790V845H849V851H908V857H967V862H1025V868H1082V874H1166V880H1251V889H1098V895H919V901H741V908H562V914H533V920H504V926H475V932H428V938H381V943H333L310 979H291V984H269V990H246V997H226V1003H205V1009H190V1016H175V1021H162V1028H147V1034H134V1056H155V1063H175V1069H194V1079H180V1085H162V1092H137V1098H114L106 1110V1117L122 1149L125 1167H137V1173H148V1180H161V1191L176 1214H200V1220H209V1230H189L180 1249L190 1256V1267H201V1275H213L203 1306H187V1313H172L162 1332H150V1341H137V1349H120V1356H108L99 1374H63Z"
      fill="#d8544f"
    />
    <circle cx="250" cy="1210" r="122" fill="#888888" fillOpacity="0.11" />
    <path d="M230 1157L283 1210L230 1264" fill="none" stroke="#666666" strokeWidth="9" />
    <circle cx="868" cy="1210" r="122" fill="#fcf2eb" />
    <path d="M862 1157H815V1204M815 1157L858 1200M874 1264H921V1217M921 1264L878 1220" fill="none" stroke={BRAND} strokeWidth="11" />
  </svg>
);

/* ---------- data rows ---------- */

const averages = [
  { text: "MA5:6.03", color: "#222222" },
  { text: "10:6.46", color: ORANGE, up: true },
  { text: "20:5.97", color: "#b5367f", up: true },
  { text: "60:5.36", color: GREEN, up: true },
  { text: "250:5.03", color: "#85b8e8", up: true },
];

const volumeLegend = [
  { text: "58.48万", color: "#222222", w: 63, k: 0.5, arrow: "down" },
  { text: "MA1:129.7万", color: ORANGE, w: 99, k: 0.52, arrow: "up" },
  { text: "MA2:106.6万", color: "#b443c4", w: 99, k: 0.52, arrow: "up" },
  { text: "MA3:69.40万", color: GREEN, w: 99, k: 0.52, arrow: "up" },
  { text: "虚拟成交量:83.50万", color: "#888888", w: 131, k: 0.512, arrow: "" },
];

const fundLegend = [
  { text: "超大:-4.083", color: "#ae453e", up: true, k: 0.59 },
  { text: "大户:-8.850", color: ORANGE, up: true, k: 0.59 },
  { text: "中户:-4.602", color: "#426fae", up: false, k: 0.59 },
  { text: "小户:17.534", color: GREEN, up: true, k: 0.56 },
];

const tabs = [
  { name: "分时", w: 188 },
  { name: "五日", w: 189 },
  { name: "日K", w: 194, active: true },
  { name: "周K", w: 188 },
  { name: "月K", w: 186 },
];

const QuoteCell: React.FC<{ label: string; value: string; color?: string; icon?: boolean; size?: number; sup?: string }> = ({
  label,
  value,
  color,
  icon,
  size = 50,
  sup,
}) => (
  <QuoteRow>
    <div className="label">
      <Text size={48} color="#666666">{label}</Text>
      {sup && <SuperScript>{sup}</SuperScript>}
      {icon && <DotsIcon />}
    </div>
    <Text size={size} color={color}>{value}</Text>
  </QuoteRow>
);

const Selector: React.FC<{ w: number; name: string; size?: number }> = ({ w, name, size = 41 }) => (
  <IndicatorSelect w={w}>
    <Text size={size} color="#222222">{name}</Text>
    <Triangle w={17} h={15} color="#666666" />
  </IndicatorSelect>
);

export default function App() {
  return (
    <>
      <GlobalStyle />
      <Page>
        <StatusBar>
          <StatusGroup gap={12}>
            <Text size={48} weight={500} color="#4b4b4b">13:04</Text>
            <AppIcons />
          </StatusGroup>
          <StatusGroup gap={5}>
            <StatusIcons />
            <Text size={47} weight={500} color="#4b4b4b" spacing={-1.2}>53%</Text>
          </StatusGroup>
        </StatusBar>

        <Header>
          <div className="left">
            <BackIcon />
            <AppLogo>
              东方
              <br />
              财富
            </AppLogo>
          </div>
          <div className="center">
            <TitleRow>
              <Text size={55.5} color="#222222">金圆股份</Text>
              <CompanyBadge>企</CompanyBadge>
            </TitleRow>
            <CodeRow>
              <Text size={43} color="#666666" spacing={-0.2}>000546</Text>
              <LevelTag>L2</LevelTag>
              <Triangle w={25} h={17} color="#cbcbcb" left={14} />
            </CodeRow>
          </div>
          <div className="right">
            <RobotIcon />
            <LegendItem left={48}>
              <ShareIcon />
            </LegendItem>
            <LegendItem left={50}>
              <SearchIcon />
            </LegendItem>
          </div>
        </Header>

        <Quote>
          <QuoteColumn>
            <QuoteRow h={116}>
              <Text size={101} weight={500} color="#de3c32" spacing={-3}>6.24</Text>
            </QuoteRow>
            <QuoteRow h={60}>
              <Text size={50} color={RED} spacing={0.3}>4.70%</Text>
              <Text size={50} color={RED}>0.28</Text>
            </QuoteRow>
            <QuoteCell label="总值" value="48.53亿" icon size={40} />
          </QuoteColumn>
          <QuoteColumn>
            <QuoteCell label="今开" value="6.05" color={RED} />
            <QuoteCell label="换手" value="8.39%" icon size={51} />
            <QuoteCell label="流值" value="43.47亿" size={49} />
          </QuoteColumn>
          <QuoteColumn>
            <QuoteCell label="最高" value="6.30" color={RED} />
            <QuoteCell label="总手" value="58.48万" size={49} />
            <QuoteCell label="市盈" value="-35.73" sup="动" icon size={40} />
          </QuoteColumn>
          <QuoteColumn>
            <QuoteCell label="最低" value="6.00" color={RED} />
            <QuoteCell label="金额" value="3.61亿" size={49} />
            <QuoteRow>
              <span />
              <MoreButton>更多</MoreButton>
            </QuoteRow>
          </QuoteColumn>
        </Quote>

        <Notice>
          <SpeakerIcon />
          <div className="message">
            <Text size={46}>自选分析：触发重点关注信号，立即点击查看</Text>
          </div>
          <CloseIcon size={36} color="#999999" sw={3} />
        </Notice>

        <Tabs>
          {tabs.map((t) => (
            <Tab key={t.name} w={t.w} active={t.active}>
              {t.name}
            </Tab>
          ))}
          <MoreTab>
            <Text size={52} color="#666666">更多</Text>
            <Triangle w={19} h={15} color="#666666" left={6} />
          </MoreTab>
          <LegendItem left={59}>
            <GearIcon />
          </LegendItem>
        </Tabs>

        <IndicatorBar>
          <SelectBox w={127} pad={9}>
            <Text size={41} color="#222222">均线</Text>
            <Triangle w={17} h={15} color="#666666" />
          </SelectBox>
          <AverageGrid>
            {averages.map((a) => (
              <div key={a.text}>
                <Text size={43} color={a.color}>{a.text}</Text>
                <Arrow up={a.up} color={a.color} />
              </div>
            ))}
          </AverageGrid>
          <LegendItem left={54}>
            <SelectBox w={148} pad={16}>
              <Text size={41} color="#222222">DK点</Text>
              <Corner />
            </SelectBox>
          </LegendItem>
          <LegendItem left={39}>
            <SelectBox w={155} pad={13}>
              <Text size={41} color="#222222">前复权</Text>
            </SelectBox>
          </LegendItem>
        </IndicatorBar>

        <Content>
          <ChartColumn>
            <Panel h={441}>
              <PriceChart />
            </Panel>
            <PanelHead>
              <Selector w={176} name="成交量" />
              {volumeLegend.map((l, i) => (
                <Condensed key={l.text} w={l.w} k={l.k} left={i ? 7 : 4}>
                  <div>
                    <Text size={29} color={l.color}>{l.text}</Text>
                    {l.arrow && <Arrow up={l.arrow === "up"} color={l.color} w={16} h={26} />}
                  </div>
                </Condensed>
              ))}
              <SideToggle>
                <svg width="22" height="36" viewBox="0 0 22 36" fill="none" stroke="#ffffff" strokeWidth="4">
                  <path d="M3 3L18 18L3 33" />
                </svg>
              </SideToggle>
            </PanelHead>
            <Panel h={159}>
              <VolumeChart />
            </Panel>
            <PanelHead>
              <Selector w={129} name="KDJ" />
              <LegendItem left={3} gap={9}>
                <Text size={47} color="#222222">K:25.19</Text>
                <Arrow color="#222222" w={25} h={42} sw={3.2} />
              </LegendItem>
              <LegendItem left={22} gap={11}>
                <Text size={47} color={ORANGE} spacing={0.3}>D:36.62</Text>
                <Arrow color={ORANGE} w={25} h={42} sw={3.2} />
              </LegendItem>
              <LegendItem left={22} gap={9}>
                <Text size={47} color="#b443c4">J:2.32</Text>
                <Arrow up color="#b443c4" w={25} h={42} sw={3.2} />
              </LegendItem>
            </PanelHead>
            <Panel h={159}>
              <KdjChart />
            </Panel>
            <PanelHead>
              <Selector w={119} name="WR" />
              <LegendItem left={3} gap={10}>
                <Text size={47} color="#222222" spacing={0.3}>WR1:76.26</Text>
                <Arrow color="#222222" w={25} h={42} sw={3.2} />
              </LegendItem>
              <LegendItem left={22} gap={10}>
                <Text size={47} color={ORANGE} spacing={0.3}>WR2:26.67</Text>
                <Arrow color={ORANGE} w={25} h={42} sw={3.2} />
              </LegendItem>
            </PanelHead>
            <Panel h={159}>
              <WrChart />
            </Panel>
            <PanelHead>
              <Selector w={218} name="资金博弈" size={42} />
              {fundLegend.map((l, i) => (
                <Condensed key={l.text} w={117} k={l.k} left={i ? 10 : 3}>
                  <div>
                    <Text size={35} color={l.color}>{l.text}</Text>
                    <Arrow up={l.up} color={l.color} w={19} h={33} sw={3} />
                  </div>
                </Condensed>
              ))}
            </PanelHead>
            <Panel h={160}>
              <FundChart />
            </Panel>
            <DateAxis>
              <AxisTicks />
              <DateRow>
                <Text size={43} color="#666666" spacing={-0.4}>20251009</Text>
                <Text size={43} color="#666666" spacing={-0.4}>20251031</Text>
                <Text size={43} color="#666666" spacing={-0.4}>20251128</Text>
              </DateRow>
            </DateAxis>
          </ChartColumn>

          <ChipColumn>
            <ChipChart />
            <ChipLegend>
              <Square color="#74b859" />
              <Text size={35} color="#666666">套牢</Text>
              <Square color="#d8544f" left={51} />
              <Text size={35} color="#666666">获利</Text>
            </ChipLegend>
            <ChipRow>
              <Text size={35} color="#666666">获利比例</Text>
              <Text size={37} weight={500}>81.27%</Text>
            </ChipRow>
            <ChipRow>
              <Text size={35} color="#666666">平均成本</Text>
              <Text size={37} weight={500}>6.15</Text>
            </ChipRow>
            <Segmented>
              <div className="segment">
                <Text size={39} color="#666666">90%筹码</Text>
              </div>
              <div className="segment selected">
                <Text size={39} weight={600}>70%筹码</Text>
              </div>
            </Segmented>
            <ChipRow>
              <Text size={35} color="#666666">价格区间</Text>
              <Text size={37} weight={500}>5.63-6.81</Text>
            </ChipRow>
            <ChipRow>
              <Text size={35} color="#666666">集中度</Text>
              <Text size={37} weight={500}>9.50%</Text>
            </ChipRow>
            <ChipRow>
              <div className="label">
                <Text size={35} color="#666666">说明</Text>
                <svg width="35" height="35" viewBox="0 0 35 35">
                  <circle cx="17.5" cy="17.5" r="17.5" fill="#cbcbcb" />
                  <circle cx="17.5" cy="9.5" r="2.6" fill="#ffffff" />
                  <path d="M17.5 16V25" stroke="#ffffff" strokeWidth="4.5" strokeLinecap="round" />
                </svg>
              </div>
              <Text size={37} weight={500}>2025-11-28</Text>
            </ChipRow>
          </ChipColumn>
        </Content>

        <Banner>
          <MegaphoneIcon />
          <div className="message">
            <Text size={46} color="#cb6433">市场波动，如何把握行业机遇?</Text>
          </div>
          <i className="divider" />
          <CloseIcon size={38} color={BRAND} sw={3.4} />
        </Banner>
        <Spacer />

        <BottomNav>
          <IndexCell>
            <UpTriangle w={24} h={9} color="#777777" />
            <Text size={41} lineHeight={72} color={RED} spacing={-0.6}>3881.25</Text>
            <div className="row">
              <Text size={35} lineHeight={10} color="#666666">上证</Text>
              <Text size={38} lineHeight={10} color={RED}>0.15%</Text>
            </div>
          </IndexCell>
          <NavItem>
            <TradeIcon />
            <Text size={34} color="#666666">交易</Text>
          </NavItem>
          <NavItem>
            <PostIcon />
            <Text size={34} color="#666666">发帖</Text>
          </NavItem>
          <NavItem>
            <GridIcon />
            <Text size={34} color="#666666">功能</Text>
          </NavItem>
          <NavItem>
            <MoreIcon />
            <Text size={34} color="#666666">设自选</Text>
          </NavItem>
        </BottomNav>
      </Page>
    </>
  );
}
